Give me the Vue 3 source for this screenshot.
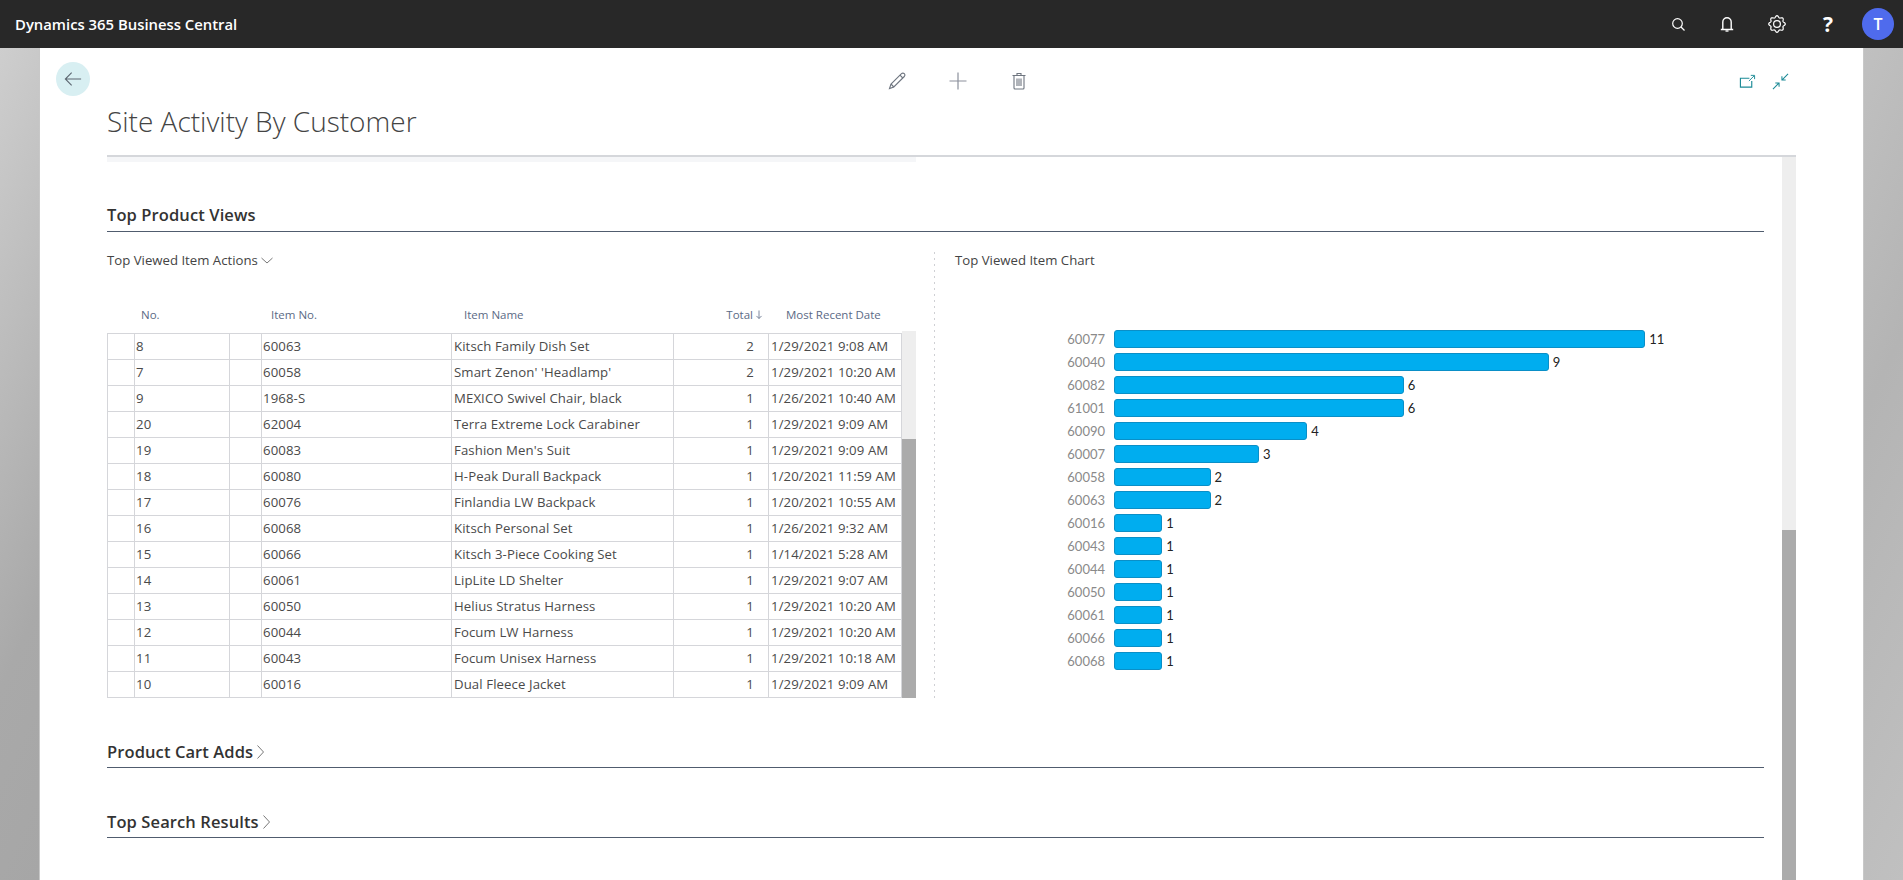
<script setup>
const rows = [
  ['8','60063','Kitsch Family Dish Set',2,'1/29/2021 9:08 AM'],
  ['7','60058',"Smart Zenon' 'Headlamp'",2,'1/29/2021 10:20 AM'],
  ['9','1968-S','MEXICO Swivel Chair, black',1,'1/26/2021 10:40 AM'],
  ['20','62004','Terra Extreme Lock Carabiner',1,'1/29/2021 9:09 AM'],
  ['19','60083',"Fashion Men's Suit",1,'1/29/2021 9:09 AM'],
  ['18','60080','H-Peak Durall Backpack',1,'1/20/2021 11:59 AM'],
  ['17','60076','Finlandia LW Backpack',1,'1/20/2021 10:55 AM'],
  ['16','60068','Kitsch Personal Set',1,'1/26/2021 9:32 AM'],
  ['15','60066','Kitsch 3-Piece Cooking Set',1,'1/14/2021 5:28 AM'],
  ['14','60061','LipLite LD Shelter',1,'1/29/2021 9:07 AM'],
  ['13','60050','Helius Stratus Harness',1,'1/29/2021 10:20 AM'],
  ['12','60044','Focum LW Harness',1,'1/29/2021 10:20 AM'],
  ['11','60043','Focum Unisex Harness',1,'1/29/2021 10:18 AM'],
  ['10','60016','Dual Fleece Jacket',1,'1/29/2021 9:09 AM'],
]
const bars = [
  ['60077',11],['60040',9],['60082',6],['61001',6],['60090',4],['60007',3],['60058',2],['60063',2],
  ['60016',1],['60043',1],['60044',1],['60050',1],['60061',1],['60066',1],['60068',1],
]
const unit = 48.3
const gear = (() => {
  let d = ''
  for (let i = 0; i <= 96; i++) {
    const t = (i / 96) * Math.PI * 2
    const r = 7.4 + 0.9 * Math.cos(8 * t)
    d += (i ? 'L' : 'M') + (10 + r * Math.cos(t)).toFixed(2) + ' ' + (10 + r * Math.sin(t)).toFixed(2)
  }
  return d + 'Z'
})()
</script>

<template>
  <div class="page">
    <header class="topbar">
      <div class="brand">Dynamics 365 Business Central</div>
      <div class="tools">
        <svg class="tool t-search" viewBox="0 0 20 20" fill="none" stroke="#fff" stroke-width="1.200"><circle cx="9.500" cy="9.500" r="4.800"/><path d="M13 13l3.500 3.500"/></svg>
        <svg class="tool t-bell" viewBox="0 0 20 20" fill="none" stroke="#fff" stroke-width="1.400"><path d="M5.800 15V8a4.200 4.200 0 0 1 8.400 0v7M3.800 15.500h12.400"/><path d="M8.500 17h3"/></svg>
        <svg class="tool t-gear" viewBox="0 0 20 20" fill="none" stroke="#fff" stroke-width="1.200"><path :d="gear"/><circle cx="10" cy="10" r="3.400"/></svg>
        <span class="help">?</span>
        <span class="avatar">T</span>
      </div>
    </header>

    <div class="stage">
      <div class="side side-left"></div>
      <main class="card">
        <div class="toolbar">
          <button class="back" aria-label="Back">
            <svg viewBox="0 0 20 20" fill="none" stroke="#5c6670" stroke-width="1.200"><path d="M19 10H1.500M8.500 3l-7 7 7 7"/></svg>
          </button>
          <div class="actions">
            <svg class="act" viewBox="0 0 20 20" fill="none" stroke="#6f7680" stroke-width="1.100"><path d="M2.500 17.500 4 13 14.500 2.700a1.500 1.500 0 0 1 2.800 2.800L6.800 16z"/><path d="M4 13l2.800 3M13 4.200l2.800 2.800"/></svg>
            <svg class="act" viewBox="0 0 20 20" fill="none" stroke="#8b909c" stroke-width="1.200"><path d="M10 1.500v17M1.500 10h17"/></svg>
            <svg class="act" viewBox="0 0 20 20" fill="none" stroke="#6f7680" stroke-width="1.100"><path d="M3.500 4.500h13M8 4.500V2.500h4v2M5 4.500V17a1 1 0 0 0 1 1h8a1 1 0 0 0 1-1V4.500"/><path d="M8 7.500v7.500M10 7.500v7.500M12 7.500v7.500"/></svg>
          </div>
          <div class="views">
            <svg class="view" viewBox="0 0 18 18" fill="none" stroke="#1b8a96" stroke-width="1.200"><path d="M11 5.500H1.500v9.500h12V8.500"/><path d="M10.500 8.500 16 3M12.500 2.500H16.500V6.500" stroke-width="1"/></svg>
            <svg class="view" viewBox="0 0 18 18" fill="none" stroke="#1b8a96" stroke-width="1.100"><path d="M17 1l-6.500 6.500M10.500 3.500v4h4M1 17l6.500-6.500M3.500 10.500h4v4"/></svg>
          </div>
        </div>
        <h1 class="title">Site Activity By Customer</h1>

        <div class="content">
          <div class="scroller">
            <div class="strip"></div>
            <h2 class="section first">Top Product Views</h2>
            <div class="panels">
              <section class="left">
                <div class="panel-title">Top Viewed Item Actions
                  <svg class="chev-down" viewBox="0 0 12 7" fill="none" stroke="#777" stroke-width="1"><path d="M.5 1 6 6l5.500-5"/></svg>
                </div>
                <div class="tablewrap">
                  <div class="table">
                    <div class="thead">
                      <span></span><span class="th">No.</span><span></span><span class="th">Item No.</span><span class="th">Item Name</span>
                      <span class="th th-total">Total
                        <svg class="sort" viewBox="0 0 10 12" fill="none" stroke="#5b6a85" stroke-width="1"><path d="M5 1v10M1.800 7.800 5 11l3.200-3.200"/></svg>
                      </span>
                      <span class="th th-date">Most Recent Date</span>
                    </div>
                    <div class="tbody">
                      <div v-for="r in rows" :key="r[0]" class="tr">
                        <span class="td"></span><span class="td">{{ r[0] }}</span><span class="td"></span><span class="td">{{ r[1] }}</span><span class="td wide">{{ r[2] }}</span><span class="td num">{{ r[3] }}</span><span class="td wide">{{ r[4] }}</span>
                      </div>
                    </div>
                  </div>
                  <div class="tscroll"><div class="tthumb"></div></div>
                </div>
              </section>
              <section class="right">
                <div class="panel-title">Top Viewed Item Chart</div>
                <div class="chart">
                  <div v-for="b in bars" :key="b[0]" class="bar-row">
                    <span class="bar-label">{{ b[0] }}</span>
                    <span class="bar" :style="{ width: b[1] * unit + 'px' }"></span>
                    <span class="bar-val">{{ b[1] }}</span>
                  </div>
                </div>
              </section>
            </div>
            <h2 class="section">Product Cart Adds
              <svg class="chev-right" viewBox="0 0 7 14" fill="none" stroke="#777" stroke-width="1"><path d="M.5.5 6.500 7 .5 13.500"/></svg>
            </h2>
            <h2 class="section">Top Search Results
              <svg class="chev-right" viewBox="0 0 7 14" fill="none" stroke="#777" stroke-width="1"><path d="M.5.5 6.500 7 .5 13.500"/></svg>
            </h2>
          </div>
          <div class="mscroll"><div class="mthumb"></div></div>
        </div>
      </main>
      <div class="side side-right"></div>
    </div>
  </div>
</template>

<style>
html, body { margin: 0; height: 880px; overflow: hidden; background: #fff; }
</style>

<style scoped>
* { box-sizing: border-box; }
.page { width: 1903px; height: 880px; display: flex; flex-direction: column; font-family: "Open Sans", "Noto Sans", sans-serif; color: #333; overflow: hidden; }
.topbar { height: 48px; background: #282828; display: flex; align-items: center; justify-content: space-between; color: #fff; padding: 0 9px 0 15px; flex: none; }
.brand { font-size: 14.850px; font-weight: 600; }
.tools { display: flex; align-items: center; }
.tool { width: 20px; height: 20px; }
.t-search { margin-right: 29px; }
.t-bell { margin-right: 30px; }
.t-gear { margin-right: 31px; }
.help { width: 20px; margin-right: 24px; text-align: center; font-size: 21px; font-weight: 700; line-height: 24px; }
.avatar { width: 32px; height: 32px; border-radius: 50%; background: #4f6bed; display: flex; align-items: center; justify-content: center; font-size: 16px; font-weight: 600; }

.stage { flex: 1; display: flex; min-height: 0; }
.side { flex: none; }
.side-left { width: 39px; background: linear-gradient(115deg, #cecece, #a9a9a9 70%, #a6a6a6); }
.side-right { width: 39px; background: linear-gradient(115deg, #c0c0c0, #b4b4b4 40%, #c0c0c0); }
.card { flex: 1; background: #fff; border-left: 1px solid #c8c8c8; border-right: 1px solid #c8c8c8; padding: 8px 67px 0; display: flex; flex-direction: column; min-width: 0; }

.toolbar { height: 50px; display: grid; grid-template-columns: 1fr auto 1fr; align-items: center; position: relative; flex: none; }
.back { position: absolute; left: -51px; top: 6px; width: 34px; height: 34px; border-radius: 50%; border: 0; background: #d8eff2; padding: 8px; }
.back svg { display: block; width: 18px; height: 18px; }
.actions { grid-column: 2; display: flex; gap: 41px; margin-left: 12px; }
.act { width: 20px; height: 20px; display: block; }
.views { grid-column: 3; justify-self: end; display: flex; gap: 16px; margin-right: 7px; }
.view { width: 17px; height: 17px; display: block; }

.title { margin: 0 0 19px; font-size: 28px; line-height: 30px; font-weight: 300; color: #444; flex: none; }

.content { flex: 1; min-height: 0; display: flex; border-top: 2px solid #d5d7db; }
.scroller { width: 1657px; flex: none; }
.strip { height: 5px; width: 809px; background: #f5f6f8; }
.section { margin: 0; padding-top: 43px; font-size: 16.500px; letter-spacing: .1px; line-height: 22px; padding-bottom: 4px; border-bottom: 1px solid #505c6e; font-weight: 600; color: #333; display: flex; align-items: center; height: 70px; }
.section.first { padding-top: 40px; }
.chev-right { width: 7px; height: 14px; margin-left: 4px; }
.chev-down { width: 12px; height: 7px; margin-left: 3px; }
.panels { display: flex; height: 466px; }
.panel-title { padding-top: 20px; height: 36px; font-size: 13.200px; line-height: 16px; color: #444; display: flex; align-items: center; }
.left { width: 809px; flex: none; }
.tablewrap { margin-top: 32px; display: flex; }
.table { width: 795px; flex: none; font-size: 13.200px; letter-spacing: .1px; }
.thead, .tr { display: grid; grid-template-columns: 27px 95px 32px 190px 222px 95px 134px; }
.thead { height: 33px; padding-bottom: 4px; align-items: center; font-size: 11.500px; letter-spacing: 0; color: #5b6a85; position: relative; }
.th { padding-left: 7px; line-height: 29px; white-space: nowrap; }
.thead .th:nth-child(4) { padding-left: 10px; }
.thead .th:nth-child(5) { padding-left: 13px; }
.th-total { display: flex; align-items: center; justify-content: flex-end; padding-right: 5px; }
.sort { width: 8px; height: 11px; margin-left: 2px; }
.th-date { padding-left: 18px; }
.tbody { border-top: 1px solid #d5d6da; }
.tr { height: 26px; }
.td { border-left: 1px solid #d5d6da; border-bottom: 1px solid #d5d6da; padding: 0 1px; line-height: 25px; white-space: nowrap; overflow: hidden; color: #4a4a4a; }
.td.wide { padding-left: 2px; }
.td:last-child { border-right: 1px solid #d5d6da; }
.num { text-align: right; padding-right: 14px; }
.tscroll { width: 14px; flex: none; background: #eee; margin-top: 31px; display: flex; flex-direction: column; height: 367px; }
.tthumb { margin-top: 108px; flex: 1; background: #ababab; }

.right { margin-left: 18px; flex: 1; padding-left: 21px; position: relative; background-image: repeating-linear-gradient(to bottom, #cfd0d4 0 2px, transparent 2px 6px); background-size: 1px 446px; background-repeat: no-repeat; background-position: 0 20px; }
.chart { margin-top: 62px; }
.bar-row { display: flex; align-items: center; height: 18px; margin-bottom: 5px; }
.bar-label { width: 150px; margin-right: 9px; text-align: right; font-family: Lato, sans-serif; font-size: 13px; color: #8a8a8a; flex: none; }
.bar { height: 18px; background: #00adef; border: 1px solid #0a8fc7; border-radius: 3px; flex: none; }
.bar-val { margin-left: 4px; font-family: Lato, sans-serif; font-size: 13px; color: #222; }

.mscroll { width: 14px; margin-left: 18px; background: #eee; display: flex; flex-direction: column; flex: none; }
.mthumb { margin-top: 373px; flex: 1; background: #ababab; }
</style>
